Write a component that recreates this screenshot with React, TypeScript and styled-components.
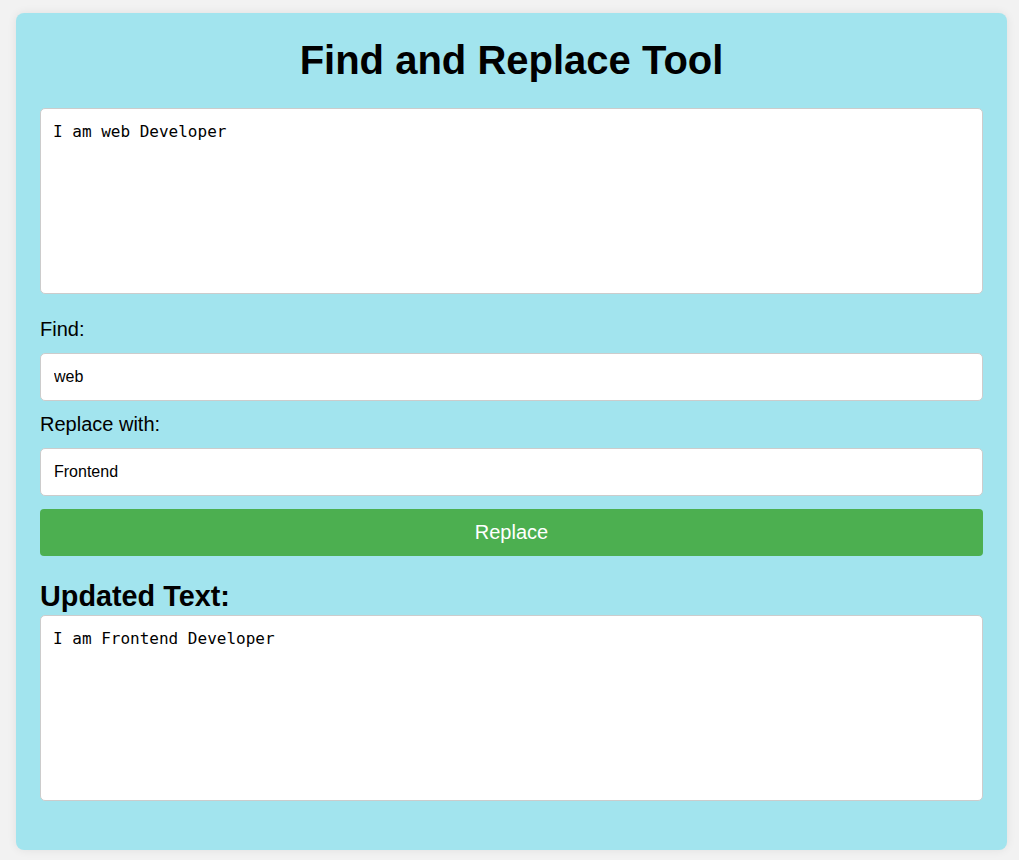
import {FC, useState} from 'react';
import styled, {createGlobalStyle} from 'styled-components';

const GlobalStyle = createGlobalStyle`
  body {
    margin: 0;
    background: #f2f2f2;
    font-family: 'Liberation Sans', Arial, sans-serif;
  }
`;

const Card = styled.div`
  display: flex;
  flex-direction: column;
  margin: 13px 12px 10px 16px;
  padding: 24px 24px 49px;
  background: #a2e4ee;
  border-radius: 8px;
  box-shadow: 0 0 10px rgba(0, 0, 0, 0.08);
`;

const Title = styled.h1`
  margin: 0 0 25px;
  font-size: 40px;
  line-height: 46px;
  font-weight: 700;
  text-align: center;
  color: #000;
`;

const TextBox = styled.textarea`
  display: block;
  box-sizing: border-box;
  width: 100%;
  height: 186px;
  margin: 0;
  padding: 12px;
  border: 1px solid #ccc;
  border-radius: 5px;
  background: #fff;
  font-family: 'DejaVu Sans Mono', 'Liberation Mono', monospace;
  font-size: 16px;
  line-height: 21px;
  color: #000;
  resize: none;
  outline: none;
`;

const Label = styled.label`
  display: block;
  margin: 0 0 12px;
  font-size: 20px;
  line-height: 23px;
  color: #000;
`;

const Input = styled.input`
  display: block;
  box-sizing: border-box;
  width: 100%;
  height: 48px;
  margin: 0 0 12px;
  padding: 0 13px;
  border: 1px solid #ccc;
  border-radius: 5px;
  background: #fff;
  font-family: 'Liberation Sans', Arial, sans-serif;
  font-size: 16px;
  color: #000;
  outline: none;
`;

const Field = styled.div<{$top?: number}>`
  display: flex;
  flex-direction: column;
  margin-top: ${p => p.$top ?? 0}px;
`;

const Button = styled.button`
  height: 47px;
  margin: 1px 0 0;
  border: none;
  border-radius: 4px;
  background: #4caf50;
  color: #fff;
  font-family: 'Liberation Sans', Arial, sans-serif;
  font-size: 20px;
  cursor: pointer;
`;

const SubTitle = styled.h2`
  margin: 24px 0 2px;
  font-size: 28.8px;
  line-height: 33px;
  font-weight: 700;
  color: #000;
`;

const App: FC = () => {
  const [text, setText] = useState('I am web Developer');
  const [find, setFind] = useState('web');
  const [replace, setReplace] = useState('Frontend');
  const [result, setResult] = useState('I am Frontend Developer');

  const onReplace = () => {
    if (!find) return setResult(text);
    setResult(text.split(find).join(replace));
  };

  return (
    <>
      <GlobalStyle />
      <Card>
        <Title>Find and Replace Tool</Title>
        <TextBox value={text} onChange={e => setText(e.target.value)} />
        <Field $top={24}>
          <Label htmlFor="find">Find:</Label>
          <Input id="find" value={find} onChange={e => setFind(e.target.value)} />
        </Field>
        <Field>
          <Label htmlFor="replace">Replace with:</Label>
          <Input id="replace" value={replace} onChange={e => setReplace(e.target.value)} />
        </Field>
        <Button onClick={onReplace}>Replace</Button>
        <SubTitle>Updated Text:</SubTitle>
        <TextBox value={result} readOnly />
      </Card>
    </>
  );
};

export default App;
